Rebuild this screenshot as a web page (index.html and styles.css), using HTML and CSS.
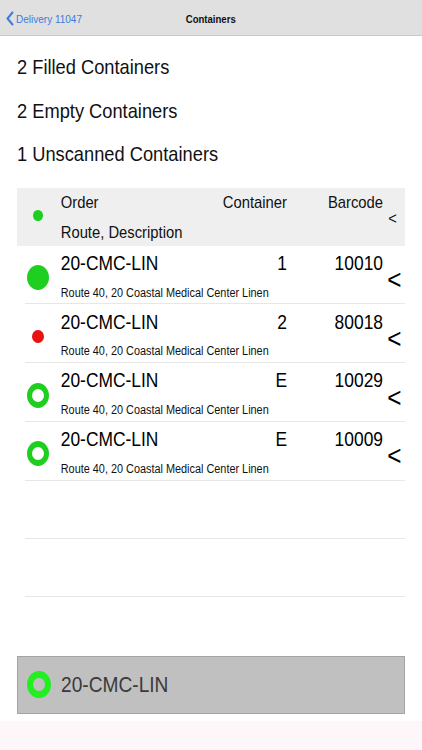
FILE: index.html
```html
<!DOCTYPE html>
<html lang="en">
<head>
<meta charset="utf-8">
<title>Containers</title>
<link rel="stylesheet" href="styles.css">
</head>
<body>
<div class="screen">
  <header class="nav">
    <a class="back" href="#">
      <svg class="back-icon" width="8" height="15" viewBox="0 0 8 15"><polyline points="6.5,1.5 1.5,7.5 6.5,13.5" fill="none" stroke="#3b7ddd" stroke-width="2" stroke-linecap="round" stroke-linejoin="round"/></svg>
      <span class="back-text">Delivery 11047</span>
    </a>
    <div class="title">Containers</div>
    <div class="nav-right"></div>
  </header>

  <section class="summary">
    <p>2 Filled Containers</p>
    <p>2 Empty Containers</p>
    <p>1 Unscanned Containers</p>
  </section>

  <div class="table">
    <div class="row head">
      <span class="dot dot-small"></span>
      <span class="order">Order</span>
      <span class="cont">Container</span>
      <span class="code">Barcode</span>
      <span class="chev">&lt;</span>
      <span class="desc">Route, Description</span>
    </div>
    <div class="row item">
      <span class="dot dot-full"></span>
      <span class="order">20-CMC-LIN</span>
      <span class="cont">1</span>
      <span class="code">10010</span>
      <span class="chev">&lt;</span>
      <span class="desc">Route 40, 20 Coastal Medical Center Linen</span>
    </div>
    <div class="row item">
      <span class="dot dot-red"></span>
      <span class="order">20-CMC-LIN</span>
      <span class="cont">2</span>
      <span class="code">80018</span>
      <span class="chev">&lt;</span>
      <span class="desc">Route 40, 20 Coastal Medical Center Linen</span>
    </div>
    <div class="row item">
      <span class="dot dot-ring"></span>
      <span class="order">20-CMC-LIN</span>
      <span class="cont">E</span>
      <span class="code">10029</span>
      <span class="chev">&lt;</span>
      <span class="desc">Route 40, 20 Coastal Medical Center Linen</span>
    </div>
    <div class="row item">
      <span class="dot dot-ring"></span>
      <span class="order">20-CMC-LIN</span>
      <span class="cont">E</span>
      <span class="code">10009</span>
      <span class="chev">&lt;</span>
      <span class="desc">Route 40, 20 Coastal Medical Center Linen</span>
    </div>
    <div class="row empty"></div>
    <div class="row empty"></div>
  </div>

  <div class="scanbar">
    <span class="dot dot-lime"></span>
    <span class="scan-text">20-CMC-LIN</span>
  </div>

  <div class="toolbar"></div>
</div>
</body>
</html>
```

FILE: styles.css
```css
* { box-sizing: border-box; }

html, body {
  margin: 0;
  padding: 0;
  background: #ffffff;
}

body {
  font-family: "Liberation Sans", Arial, sans-serif;
  color: #000;
}

.screen {
  width: 422px;
  height: 750px;
  display: flex;
  flex-direction: column;
  overflow: hidden;
}

/* The reference type is horizontally condensed (Helvetica Neue, narrow).
   Text boxes are squeezed horizontally to match. */
.back-text, .title, .summary p, .row .order, .row .cont, .row .code,
.row .chev, .row .desc, .scan-text {
  transform: scaleX(0.87);
  transform-origin: left center;
}

/* Navigation bar */
.nav {
  height: 36px;
  flex: none;
  background: #e0e0e0;
  border-bottom: 1px solid #cacaca;
  display: grid;
  grid-template-columns: 1fr auto 1fr;
  align-items: center;
  padding-top: 2px;
}

.back {
  display: flex;
  align-items: center;
  gap: 2px;
  padding-left: 6px;
  color: #3b7ddd;
  text-decoration: none;
  font-size: 11.5px;
}

.back-icon { display: block; }
.back-text { display: inline-block; }

.title {
  font-size: 11px;
  font-weight: bold;
  color: #111;
  transform-origin: center center;
}

/* Summary lines */
.summary {
  padding: 9px 0 0 17px;
  flex: none;
}

.summary p {
  margin: 0;
  font-size: 21px;
  line-height: 43.5px;
  color: #111;
}

/* Table */
.table {
  margin: 12px 17px 0 17px;
  display: flex;
  flex-direction: column;
  flex: none;
}

.row {
  display: grid;
  grid-template-columns: 42px 150px 78px 96px 22px;
  grid-template-rows: auto auto;
}

.row .order { grid-column: 2; grid-row: 1; padding-left: 2px; }
.row .cont  { grid-column: 3; grid-row: 1; text-align: right; transform-origin: right center; }
.row .code  { grid-column: 4; grid-row: 1; text-align: right; transform-origin: right center; }
.row .chev  { grid-column: 5; grid-row: 1 / span 2; align-self: center; padding-left: 5px; }
.row .desc  { grid-column: 2 / span 4; grid-row: 2; padding-left: 2px; white-space: nowrap; }
.row .dot   { grid-column: 1; grid-row: 1 / span 2; align-self: center; justify-self: center; }

.head {
  height: 58px;
  background: #efefef;
  padding-top: 4px;
  row-gap: 7px;
  font-size: 17px;
  line-height: 22px;
  color: #111;
}

.head .chev {
  font-size: 17px;
  line-height: 17px;
  padding-left: 6px;
}

.head .dot { margin-bottom: 6px; }

.item, .empty {
  height: 58.75px;
  background: linear-gradient(#e7e7e7, #e7e7e7) no-repeat 8px 100% / calc(100% - 8px) 1px;
}

.empty { height: 58px; }

.item {
  padding-top: 5.4px;
  row-gap: 6px;
}

.item .order, .item .cont, .item .code {
  font-size: 20px;
  line-height: 24px;
  color: #000;
}

.item .desc {
  font-size: 12.5px;
  line-height: 18px;
  color: #111;
}

.item .chev {
  font-size: 28px;
  line-height: 28px;
  padding-top: 5px;
  padding-left: 5px;
  color: #000;
}

/* Status dots (slightly oval, as in the condensed reference) */
.dot {
  display: block;
  border-radius: 50%;
}

.dot-small {
  width: 9.5px;
  height: 11px;
  background: #1fcf1f;
}

.dot-full {
  width: 22px;
  height: 25px;
  background: #1fcf1f;
}

.dot-red {
  width: 11.5px;
  height: 13px;
  background: #ea1111;
}

.dot-ring {
  width: 22px;
  height: 25px;
  border-style: solid;
  border-color: #1fcf1f;
  border-width: 6px 5.2px;
  background: #fff;
}

/* Scan bar */
.scanbar {
  margin: 59px 17px 0 17px;
  height: 58px;
  flex: none;
  background: #c0c0c0;
  border: 1px solid #a4a4a4;
  display: flex;
  align-items: center;
  padding-left: 9px;
  gap: 10.5px;
}

.dot-lime {
  width: 23.5px;
  height: 27px;
  border-style: solid;
  border-color: #22ee22;
  border-width: 7px 6px;
  background: #c0c0c0;
}

.scan-text {
  display: inline-block;
  font-size: 22px;
  color: #3a3a3a;
}

.toolbar {
  margin-top: 7px;
  flex: 1;
  background: #fdf7f9;
}
```
